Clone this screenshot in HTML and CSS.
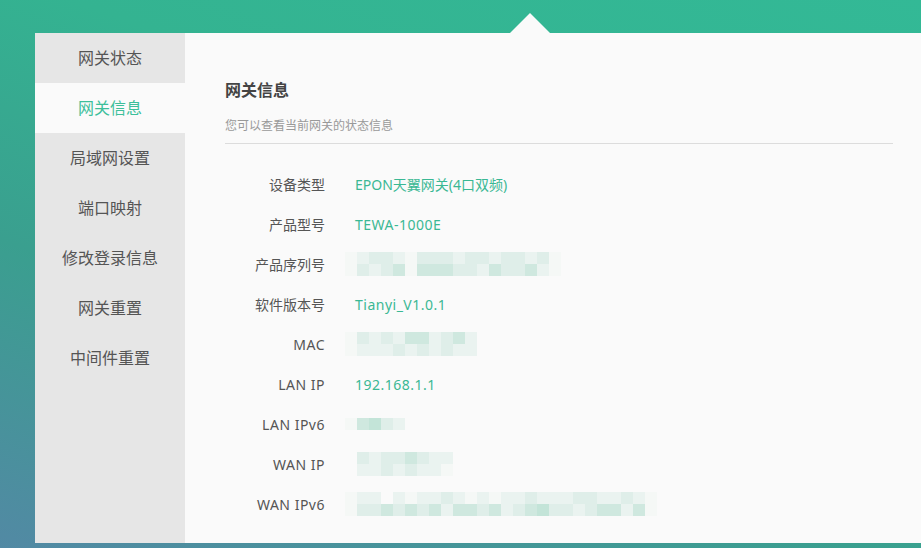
FILE: index.html
```html
<!DOCTYPE html>
<html lang="zh-CN">
<head>
  <meta charset="UTF-8">
  <meta name="viewport" content="width=device-width, initial-scale=1.0">
  <title>网关信息</title>
  <link rel="stylesheet" href="styles.css">
</head>
<body>
  <div class="top">
    <span class="arrow"></span>
  </div>
  <div class="panel">
    <ul class="menu">
      <li>网关状态</li>
      <li class="active">网关信息</li>
      <li>局域网设置</li>
      <li>端口映射</li>
      <li>修改登录信息</li>
      <li>网关重置</li>
      <li>中间件重置</li>
    </ul>
    <div class="content">
      <h2>网关信息</h2>
      <p class="sub">您可以查看当前网关的状态信息</p>
      <div class="rows">
        <div class="row"><span class="label">设备类型</span><span class="value">EPON天翼网关(4口双频)</span></div>
        <div class="row"><span class="label">产品型号</span><span class="value latin">TEWA-1000E</span></div>
        <div class="row"><span class="label">产品序列号</span>
          <span class="mosaic">
            <i class="e"></i><i class="a"></i><i class="b"></i><i class="b"></i><i class="a"></i><i class="e"></i><i class="b"></i><i class="b"></i><i class="b"></i><i class="a"></i><i class="b"></i><i class="b"></i><i class="a"></i><i class="b"></i><i class="b"></i><i class="a"></i><i class="b"></i><i class="e"></i>
            <i class="e"></i><i class="b"></i><i class="a"></i><i class="b"></i><i class="c"></i><i class="e"></i><i class="c"></i><i class="c"></i><i class="c"></i><i class="b"></i><i class="b"></i><i class="a"></i><i class="c"></i><i class="b"></i><i class="b"></i><i class="c"></i><i class="a"></i><i class="e"></i>
          </span>
        </div>
        <div class="row"><span class="label">软件版本号</span><span class="value latin">Tianyi_V1.0.1</span></div>
        <div class="row"><span class="label latin">MAC</span>
          <span class="mosaic">
            <i class="e"></i><i class="b"></i><i class="a"></i><i class="b"></i><i class="a"></i><i class="c"></i><i class="c"></i><i class="a"></i><i class="b"></i><i class="c"></i><i class="a"></i>
            <i class="e"></i><i class="a"></i><i class="a"></i><i class="a"></i><i class="b"></i><i class="a"></i><i class="b"></i><i class="a"></i><i class="b"></i><i class="a"></i><i class="a"></i>
          </span>
        </div>
        <div class="row"><span class="label latin">LAN IP</span><span class="value latin">192.168.1.1</span></div>
        <div class="row"><span class="label latin">LAN IPv6</span>
          <span class="mosaic">
            <i class="e"></i><i class="c"></i><i class="d"></i><i class="b"></i><i class="a"></i>
          </span>
        </div>
        <div class="row"><span class="label latin">WAN IP</span>
          <span class="mosaic">
            <i class="n"></i><i class="b"></i><i class="a"></i><i class="b"></i><i class="b"></i><i class="c"></i><i class="b"></i><i class="a"></i><i class="a"></i>
            <i class="n"></i><i class="a"></i><i class="a"></i><i class="b"></i><i class="a"></i><i class="b"></i><i class="a"></i><i class="a"></i><i class="e"></i>
          </span>
        </div>
        <div class="row"><span class="label latin">WAN IPv6</span>
          <span class="mosaic">
            <i class="e"></i><i class="a"></i><i class="a"></i><i class="n"></i><i class="a"></i><i class="e"></i><i class="a"></i><i class="a"></i><i class="b"></i><i class="a"></i><i class="e"></i><i class="a"></i><i class="e"></i><i class="a"></i><i class="a"></i><i class="b"></i><i class="a"></i><i class="a"></i><i class="a"></i><i class="b"></i><i class="b"></i><i class="a"></i><i class="a"></i><i class="b"></i><i class="a"></i><i class="e"></i>
            <i class="e"></i><i class="b"></i><i class="b"></i><i class="c"></i><i class="b"></i><i class="c"></i><i class="b"></i><i class="c"></i><i class="a"></i><i class="c"></i><i class="c"></i><i class="b"></i><i class="c"></i><i class="a"></i><i class="b"></i><i class="c"></i><i class="d"></i><i class="b"></i><i class="b"></i><i class="a"></i><i class="b"></i><i class="c"></i><i class="c"></i><i class="a"></i><i class="c"></i><i class="e"></i>
          </span>
        </div>
      </div>
    </div>
  </div>
</body>
</html>
```

FILE: styles.css
```css
html, body {
  margin: 0;
  padding: 0;
}
body {
  width: 921px;
  height: 548px;
  overflow: hidden;
  font-family: "Noto Sans", "Noto Sans CJK SC", sans-serif;
  background: linear-gradient(200deg, #33b996 0%, #34b391 35%, #3a9f8f 65%, #5289a4 100%);
}
.top {
  height: 33px;
  position: relative;
}
.arrow {
  position: absolute;
  left: 510px;
  top: 13px;
  width: 0;
  height: 0;
  border-left: 20px solid transparent;
  border-right: 20px solid transparent;
  border-bottom: 20px solid #fafafa;
}
.panel {
  margin-left: 35px;
  height: 510px;
  display: flex;
  background-color: #fafafa;
}
.menu {
  list-style: none;
  margin: 0;
  padding: 0;
  width: 150px;
  background-color: #e6e6e6;
}
.menu li {
  height: 50px;
  line-height: 50px;
  text-align: center;
  font-size: 16px;
  color: #555;
}
.menu li.active {
  background-color: #fafafa;
  color: #3dbf9a;
}
.content {
  flex: 1;
  padding: 44px 28px 0 40px;
}
h2 {
  margin: 0;
  font-size: 16px;
  font-weight: bold;
  color: #444;
  line-height: 26px;
}
.sub {
  margin: 14px 0 0;
  font-size: 12px;
  color: #999;
  line-height: 18px;
  padding-bottom: 8px;
  border-bottom: 1px solid #dcdcdc;
}
.rows {
  padding-top: 20px;
}
.row {
  height: 40px;
  display: flex;
  align-items: center;
  font-size: 14px;
}
.label {
  width: 100px;
  text-align: right;
  color: #555;
}
.value {
  margin-left: 30px;
  color: #3ab894;
}
.latin {
  letter-spacing: 0.5px;
}
.mosaic {
  margin-left: 20px;
  display: flex;
  flex-wrap: wrap;
}
.mosaic i {
  display: block;
  width: 12px;
  height: 12px;
}
.mosaic .a { background: #eaf3f0; }
.mosaic .b { background: #dfeee9; }
.mosaic .c { background: #cfe8df; }
.mosaic .d { background: #c3e4d8; }
.mosaic .e { background: #f5f8f6; }
.mosaic .n { background: transparent; }
.row:nth-child(3) .mosaic { width: 216px; }
.row:nth-child(5) .mosaic { width: 132px; }
.row:nth-child(7) .mosaic { width: 60px; }
.row:nth-child(8) .mosaic { width: 108px; }
.row:nth-child(9) .mosaic { width: 312px; }
```
